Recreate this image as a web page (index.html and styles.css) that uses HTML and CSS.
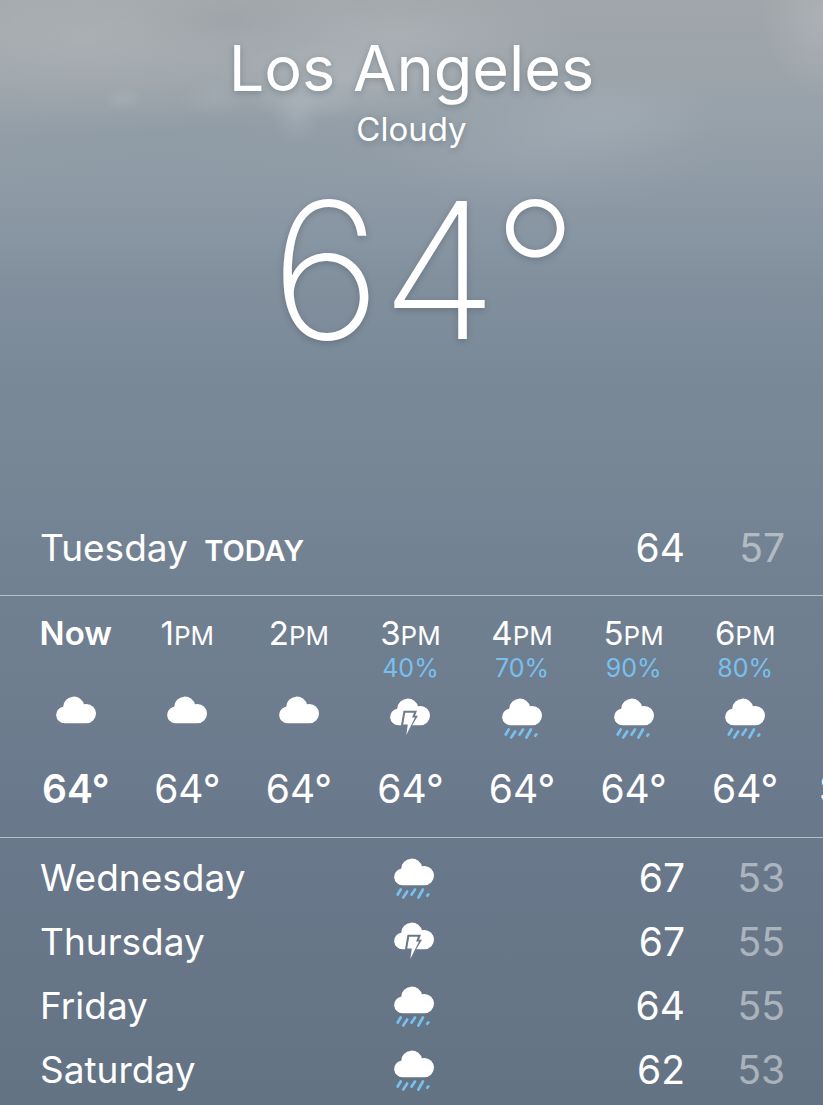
FILE: index.html
```html
<!DOCTYPE html>
<html lang="en">
<head>
<meta charset="utf-8">
<meta name="viewport" content="width=device-width, initial-scale=1">
<title>Weather – Los Angeles</title>
<link rel="stylesheet" href="styles.css">
</head>
<body>
<svg class="defs" width="0" height="0" aria-hidden="true">
  <defs>
    <path id="cloud-shape" d="M8.500 28.300a8.300 8.300 0 0 1-1.300-16.500A10.600 10.600 0 0 1 28.200 10.200L27.800 9.300Q29 8.900 30.300 8.900A9.700 9.700 0 0 1 30.300 28.300Z"/>
    <symbol id="cloudy" viewBox="0 0 40 44"><use href="#cloud-shape" fill="#fff"/></symbol>
    <symbol id="rain" viewBox="0 0 40 44">
      <use href="#cloud-shape" fill="#fff"/>
      <path d="M6.700 32.500 3.700 37.500M13.200 34.500 9.200 40.500M21 32.500 17.500 37.700M28.900 32.500 24.400 40.500M34.300 37.500l-1 1.200" fill="none" stroke="#78c0ee" stroke-width="2.700" stroke-linecap="round"/>
    </symbol>
    <symbol id="storm" viewBox="0 0 40 44">
      <path fill="#fff" fill-rule="evenodd" d="M11 28.300H8.500a8.300 8.300 0 0 1-1.300-16.500A10.600 10.600 0 0 1 28.200 10.200L27.800 9.300Q29 8.900 30.300 8.900A9.700 9.700 0 0 1 30.300 28.300H22.200L28 18.700H25L27 13.700H13.500Z"/>
      <path fill="#fff" d="M15.200 15.700H24L22 20.500H25L16.300 38 17.800 27.500H13.200Z"/>
    </symbol>
  </defs>
</svg>
<main class="weather">
  <header class="current">
    <h1 class="city">Los Angeles</h1>
    <p class="condition">Cloudy</p>
    <p class="temperature">64°</p>
  </header>
  <section class="day today">
    <h2 class="day-name">Tuesday <span class="today-label">TODAY</span></h2>
    <span class="high">64</span><span class="low">57</span>
  </section>
  <ol class="hourly">
    <li class="hour now"><span class="time">Now</span><span class="chance"></span><svg class="icon" role="img" aria-label="Cloudy"><use href="#cloudy"/></svg><span class="degrees">64°</span></li>
    <li class="hour"><span class="time">1<small>PM</small></span><span class="chance"></span><svg class="icon" role="img" aria-label="Cloudy"><use href="#cloudy"/></svg><span class="degrees">64°</span></li>
    <li class="hour"><span class="time">2<small>PM</small></span><span class="chance"></span><svg class="icon" role="img" aria-label="Cloudy"><use href="#cloudy"/></svg><span class="degrees">64°</span></li>
    <li class="hour wet"><span class="time">3<small>PM</small></span><span class="chance">40%</span><svg class="icon" role="img" aria-label="Thunderstorm"><use href="#storm"/></svg><span class="degrees">64°</span></li>
    <li class="hour wet"><span class="time">4<small>PM</small></span><span class="chance">70%</span><svg class="icon" role="img" aria-label="Rain"><use href="#rain"/></svg><span class="degrees">64°</span></li>
    <li class="hour wet"><span class="time">5<small>PM</small></span><span class="chance">90%</span><svg class="icon" role="img" aria-label="Rain"><use href="#rain"/></svg><span class="degrees">64°</span></li>
    <li class="hour wet"><span class="time">6<small>PM</small></span><span class="chance">80%</span><svg class="icon" role="img" aria-label="Rain"><use href="#rain"/></svg><span class="degrees">64°</span></li>
    <li class="hour sunset"><span class="time"></span><span class="chance"></span><span class="icon"></span><span class="degrees">Sunset</span></li>
  </ol>
  <section class="daily">
    <div class="day"><h2 class="day-name">Wednesday</h2><svg class="icon" role="img" aria-label="Rain"><use href="#rain"/></svg><span class="high">67</span><span class="low">53</span></div>
    <div class="day"><h2 class="day-name">Thursday</h2><svg class="icon" role="img" aria-label="Thunderstorm"><use href="#storm"/></svg><span class="high">67</span><span class="low">55</span></div>
    <div class="day"><h2 class="day-name">Friday</h2><svg class="icon" role="img" aria-label="Rain"><use href="#rain"/></svg><span class="high">64</span><span class="low">55</span></div>
    <div class="day"><h2 class="day-name">Saturday</h2><svg class="icon" role="img" aria-label="Rain"><use href="#rain"/></svg><span class="high">62</span><span class="low">53</span></div>
  </section>
</main>
</body>
</html>
```
FILE: styles.css
```css
* { box-sizing: border-box; margin: 0; padding: 0; }

body {
  font-family: Inter, "Liberation Sans", sans-serif;
  color: #fff;
  overflow-x: hidden;
}

.defs { position: absolute; }

.weather {
  min-height: 100vh;
  overflow: hidden;
  background:
    radial-gradient(ellipse 20px 12px at 15% 99px, rgba(195, 203, 208, .2), transparent),
    radial-gradient(ellipse 34px 18px at 26% 98px, rgba(190, 198, 204, .15), transparent),
    radial-gradient(ellipse 26px 26px at 36% 117px, rgba(195, 203, 208, .22), transparent),
    radial-gradient(ellipse 54px 20px at 37% 101px, rgba(195, 203, 208, .22), transparent),
    radial-gradient(ellipse 130px 40px at 42% 80px, rgba(190, 196, 200, .35), transparent),
    radial-gradient(ellipse 180px 60px at 48% 38px, rgba(186, 191, 194, .4), rgba(186, 191, 194, .15) 55%, transparent),
    radial-gradient(ellipse 300px 100px at 10% 35px, rgba(182, 186, 188, .45), rgba(182, 186, 188, .2) 55%, transparent),
    radial-gradient(ellipse 120px 34px at 28% 22px, rgba(138, 144, 150, .35), rgba(138, 144, 150, .12) 55%, transparent),
    radial-gradient(ellipse 110px 44px at 74% 116px, rgba(180, 188, 198, .25), transparent),
    radial-gradient(ellipse 180px 64px at 66% 146px, rgba(170, 180, 190, .3), rgba(170, 180, 190, .1) 60%, transparent),
    radial-gradient(ellipse 60px 80px at 100% 15px, rgba(190, 193, 196, .4), transparent),
    radial-gradient(ellipse 360px 70px at 20% 135px, rgba(130, 144, 155, .25), rgba(130, 144, 155, .08) 60%, transparent),
    linear-gradient(#a0a6aa 0, #9da5ab 70px, #95a0a9 130px, #8d99a5 200px, #82909e 280px, #7a8998 370px, #778695 480px, #718091 600px, #6a788b 820px, #647384 1105px);
}

.current {
  display: flex;
  flex-direction: column;
  align-items: center;
  height: 510px;
  padding-top: 28px;
  text-shadow: 0 2px 6px rgba(50, 60, 70, .3);
}
.city { font-size: 63px; font-weight: 400; line-height: 80px; }
.condition { font-size: 33px; line-height: 42px; }
.temperature { font-size: 190px; font-weight: 200; line-height: 240px; padding-left: 26px; }

.day {
  display: grid;
  grid-template-columns: 1fr 40px 251px 100px;
  align-items: center;
  height: 64px;
  padding: 0 38px 0 40px;
}
.day-name { font-size: 37px; font-weight: 400; }
.high, .low { font-size: 39px; text-align: right; }
.low { opacity: .45; }
.today { grid-template-columns: 1fr 101px 100px; height: 74px; }
.today-label { font-size: 29px; font-weight: 600; margin-left: 6px; }

.hourly {
  display: grid;
  grid-auto-flow: column;
  grid-auto-columns: calc(100% / 7);
  padding: 17px 22px 21px 20px;
  margin-top: 11px;
  border-top: 1px solid rgba(255, 255, 255, .5);
  border-bottom: 1px solid rgba(255, 255, 255, .5);
  overflow: hidden;
  list-style: none;
}
.hour { display: flex; flex-direction: column; align-items: center; }
.time { font-size: 33px; line-height: 40px; height: 40px; }
.time small { font-size: 26px; }
.chance { font-size: 25px; line-height: 30px; height: 30px; color: #78c0ee; }
.icon { width: 40px; height: 44px; }
.hour .icon { margin: 12px 0 23px; }
.hour.wet .icon { margin: 14px 0 21px; }
.degrees { font-size: 39px; line-height: 54px; }
.now .time, .now .degrees { font-weight: 600; }
.sunset { align-items: flex-start; padding-left: 18px; }

.daily { padding: 7px 0 3px; }
.daily .icon { margin-top: 4px; }
```
